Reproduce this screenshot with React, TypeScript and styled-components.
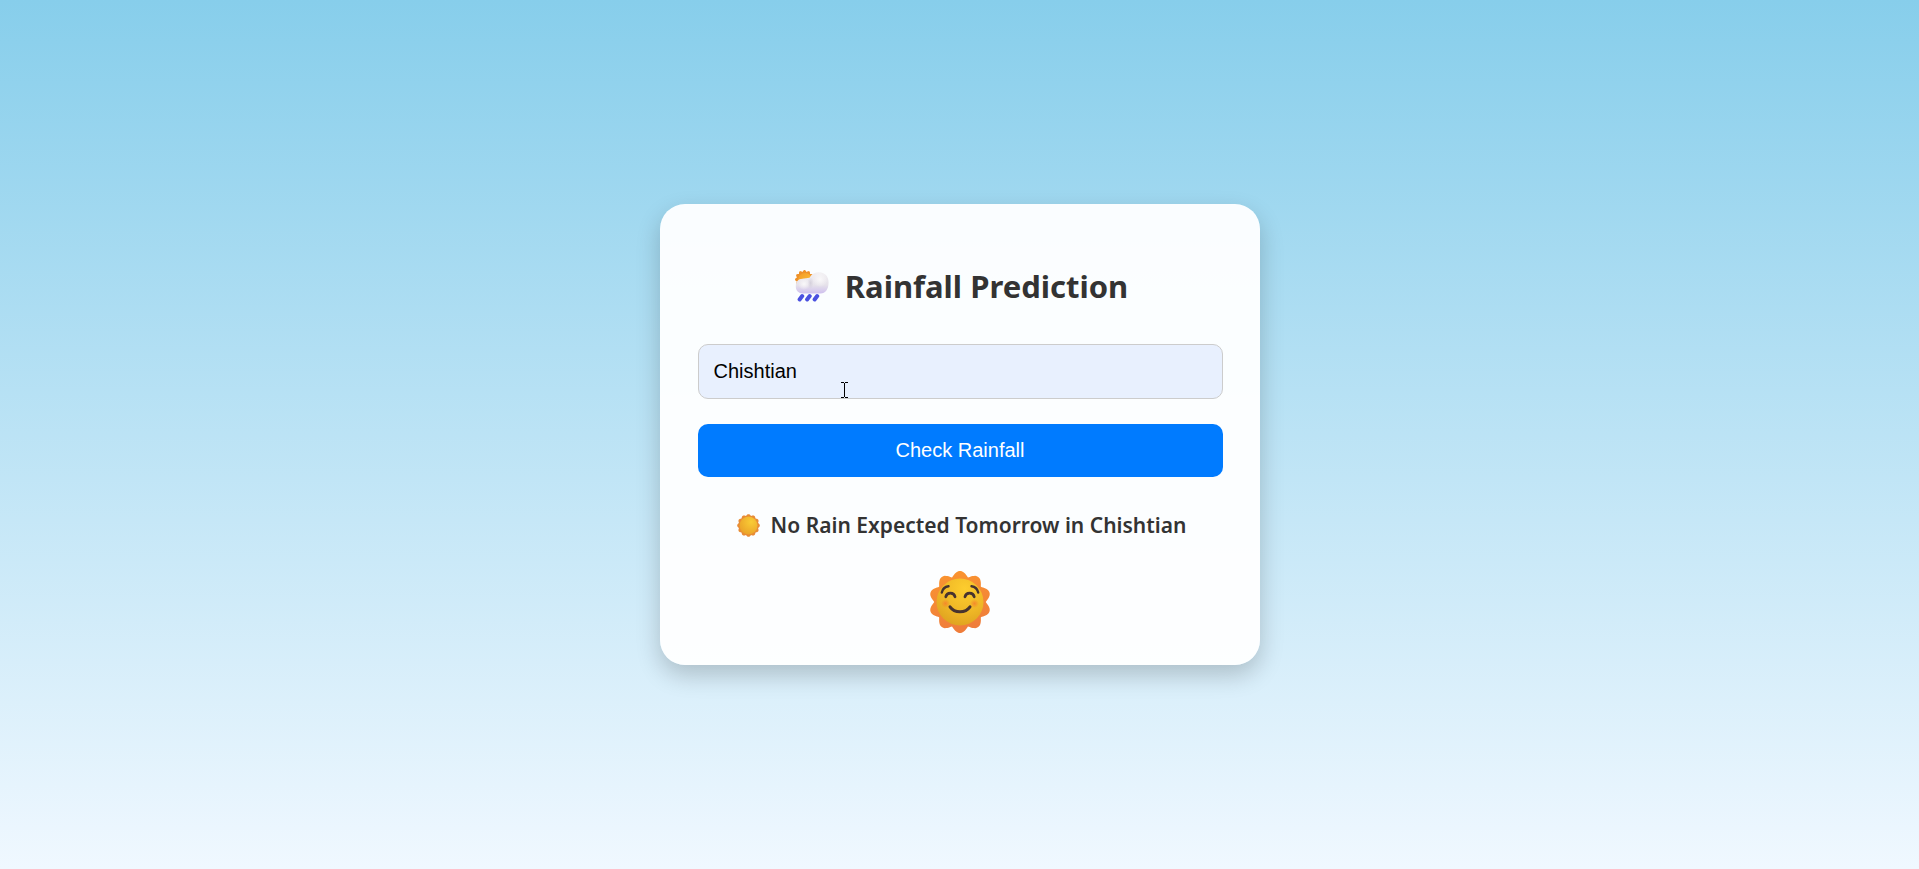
import React, { useState } from "react";
import styled, { createGlobalStyle } from "styled-components";

const GlobalStyle = createGlobalStyle`
  *, *::before, *::after { box-sizing: border-box; }
  body {
    margin: 0;
    font-family: "Segoe UI", "Noto Sans", "Open Sans", sans-serif;
    color: #333;
  }
`;

const Page = styled.main`
  min-height: 100vh;
  display: flex;
  align-items: center;
  justify-content: center;
  background: linear-gradient(to bottom, #87ceeb, #f0f8ff);
`;

const Card = styled.section`
  width: 100%;
  max-width: 600px;
  padding: 60px 37px 32px 38px;
  border-radius: 25px;
  background: rgba(255, 255, 255, 0.95);
  box-shadow: 0 10px 25px rgba(0, 0, 0, 0.2);
  display: flex;
  flex-direction: column;
`;

const Title = styled.h1`
  margin: 0 0 36px;
  display: flex;
  align-items: center;
  justify-content: center;
  gap: 16px;
  font-size: 31px;
  line-height: 44px;
  font-weight: 700;
`;

const Form = styled.form`
  display: flex;
  flex-direction: column;
  gap: 25px;
`;

const Field = styled.div`
  position: relative;
  display: flex;
`;

const CityInput = styled.input`
  flex: 1;
  min-width: 0;
  padding: 14px 15px;
  border: 1px solid #ccc;
  border-radius: 10px;
  outline: none;
  background: #e8f0fe;
  color: #000;
  font: 20px/25px "Liberation Sans", Arial, sans-serif;
`;

const Pointer = styled.svg`
  position: absolute;
  left: 143px;
  top: 38px;
  pointer-events: none;
`;

const Submit = styled.button`
  padding: 14px;
  border: 0;
  border-radius: 10px;
  background: #007bff;
  color: #fff;
  font: 20px/25px "Liberation Sans", Arial, sans-serif;
  cursor: pointer;
`;

const Result = styled.p`
  margin: 32px 0 30px;
  display: flex;
  align-items: center;
  justify-content: center;
  gap: 11px;
  font-size: 21px;
  line-height: 32px;
  font-weight: 600;
`;

const Mood = styled.div`
  display: flex;
  justify-content: center;
`;

const scallops = (count: number, center: number, inner: number, depth: number) => {
  const points: string[] = [];
  for (let i = 0; i < 180; i++) {
    const a = (i * Math.PI) / 90;
    const r = inner + depth * Math.pow((1 + Math.cos(a * count)) / 2, 0.6);
    points.push(`${(center + r * Math.sin(a)).toFixed(2)} ${(center - r * Math.cos(a)).toFixed(2)}`);
  }
  return `M${points.join("L")}Z`;
};

const RainCloud = () => (
  <svg width="37" height="32" viewBox="-3 0 37 32" aria-hidden="true">
    <defs>
      <linearGradient id="cloud" x1="0" y1="0" x2="0" y2="1">
        <stop offset="0" stopColor="#f2f0f3" />
        <stop offset="0.6" stopColor="#e6e2ea" />
        <stop offset="1" stopColor="#cfc0ee" />
      </linearGradient>
      <radialGradient id="puff">
        <stop offset="0" stopColor="#fbfafb" stopOpacity="0.9" />
        <stop offset="1" stopColor="#fbfafb" stopOpacity="0" />
      </radialGradient>
      <radialGradient id="fold">
        <stop offset="0" stopColor="#c9c4d2" stopOpacity="0.6" />
        <stop offset="1" stopColor="#c9c4d2" stopOpacity="0" />
      </radialGradient>
      <linearGradient id="smallSun" x1="0" y1="0" x2="1" y2="1">
        <stop offset="0" stopColor="#f49a26" />
        <stop offset="1" stopColor="#fcc53a" />
      </linearGradient>
    </defs>
    <path d={scallops(12, 9.5, 7.8, 1.7)} fill="#ee9129" />
    <circle cx="10" cy="10" r="7" fill="url(#smallSun)" />
    <path
      d="M8 23.500C3.500 23.500 .8 20.500 .8 16.500C.8 12 3 8.800 7.500 8.800C10 8.800 12 8 14.500 7.800C16.500 4 20 2.300 24 2.300C29.700 2.300 33.600 6.500 33.600 12.500C33.600 19 30.500 23.500 25.500 23.500Z"
      fill="url(#cloud)"
    />
    <ellipse cx="15.500" cy="13" rx="3" ry="6" fill="url(#fold)" />
    <circle cx="25" cy="9.500" r="7.500" fill="url(#puff)" />
    <circle cx="9" cy="14" r="6" fill="url(#puff)" />
    <g stroke="#4a50e0" strokeWidth="4" strokeLinecap="round">
      <path d="M7.200 26 4.600 29.500M14.700 26l-2.600 3.500M22.200 26 19.600 29.500" />
    </g>
  </svg>
);

const Sun = () => (
  <svg width="26" height="23" viewBox="-3 0 26 23" aria-hidden="true">
    <defs>
      <radialGradient id="sunDisc" cx="0.65" cy="0.3" r="0.8">
        <stop offset="0" stopColor="#f9cc35" />
        <stop offset="1" stopColor="#eaa028" />
      </radialGradient>
    </defs>
    <path d={scallops(12, 11.5, 9.9, 1.4)} fill="#e88c35" />
    <circle cx="11.5" cy="11.5" r="9" fill="url(#sunDisc)" />
  </svg>
);

const HappySun = () => (
  <svg width="62" height="62" viewBox="0 0 62 62" role="img" aria-label="Sunny">
    <defs>
      <linearGradient id="petals" x1="0" y1="0" x2="0.2" y2="1">
        <stop offset="0" stopColor="#fb962f" />
        <stop offset="1" stopColor="#ef7d3b" />
      </linearGradient>
      <radialGradient id="face" cx="0.6" cy="0.22" r="0.85">
        <stop offset="0" stopColor="#fdcd2e" />
        <stop offset="0.6" stopColor="#eeb626" />
        <stop offset="1" stopColor="#dda01f" />
      </radialGradient>
      <radialGradient id="blush">
        <stop offset="0" stopColor="#f57f2c" stopOpacity="0.8" />
        <stop offset="1" stopColor="#f57f2c" stopOpacity="0" />
      </radialGradient>
    </defs>
    <path d={scallops(10, 31, 25.8, 5.2)} fill="url(#petals)" />
    <circle cx="31" cy="31" r="23.500" fill="url(#face)" />
    <circle cx="16.500" cy="32.500" r="4.500" fill="url(#blush)" />
    <circle cx="45.500" cy="32.500" r="4.500" fill="url(#blush)" />
    <g fill="none" stroke="#47332f" strokeLinecap="round">
      <path strokeWidth="2.400" d="M12.800 21.500C13.500 18 16 15.700 19.500 15.200M49.200 21.500C48.500 18 46 15.700 42.500 15.200" />
      <path strokeWidth="2.800" d="M16.800 25.800C17.800 20.800 25 20.800 26 25.800M36 25.800C37 20.800 44.200 20.800 45.200 25.800" />
      <path strokeWidth="3" d="M21 35.800C25.500 42.300 36.500 42.300 41 35.800" />
    </g>
  </svg>
);

export default function App() {
  const [city, setCity] = useState("Chishtian");
  const [checked, setChecked] = useState("Chishtian");

  return (
    <>
      <GlobalStyle />
      <Page>
        <Card>
          <Title>
            <RainCloud />
            Rainfall Prediction
          </Title>
          <Form
            onSubmit={(e) => {
              e.preventDefault();
              setChecked(city);
            }}
          >
            <Field>
              <CityInput
                type="text"
                aria-label="City"
                value={city}
                onChange={(e) => setCity(e.target.value)}
              />
              <Pointer width="7" height="16" viewBox="0 0 7 16" aria-hidden="true">
                <path d="M0 .5h3M4 .5h3M3.500 1v14M0 15.500h3M4 15.500h3" stroke="#000" fill="none" />
              </Pointer>
            </Field>
            <Submit type="submit">Check Rainfall</Submit>
          </Form>
          <Result>
            <Sun />
            No Rain Expected Tomorrow in {checked}
          </Result>
          <Mood>
            <HappySun />
          </Mood>
        </Card>
      </Page>
    </>
  );
}
